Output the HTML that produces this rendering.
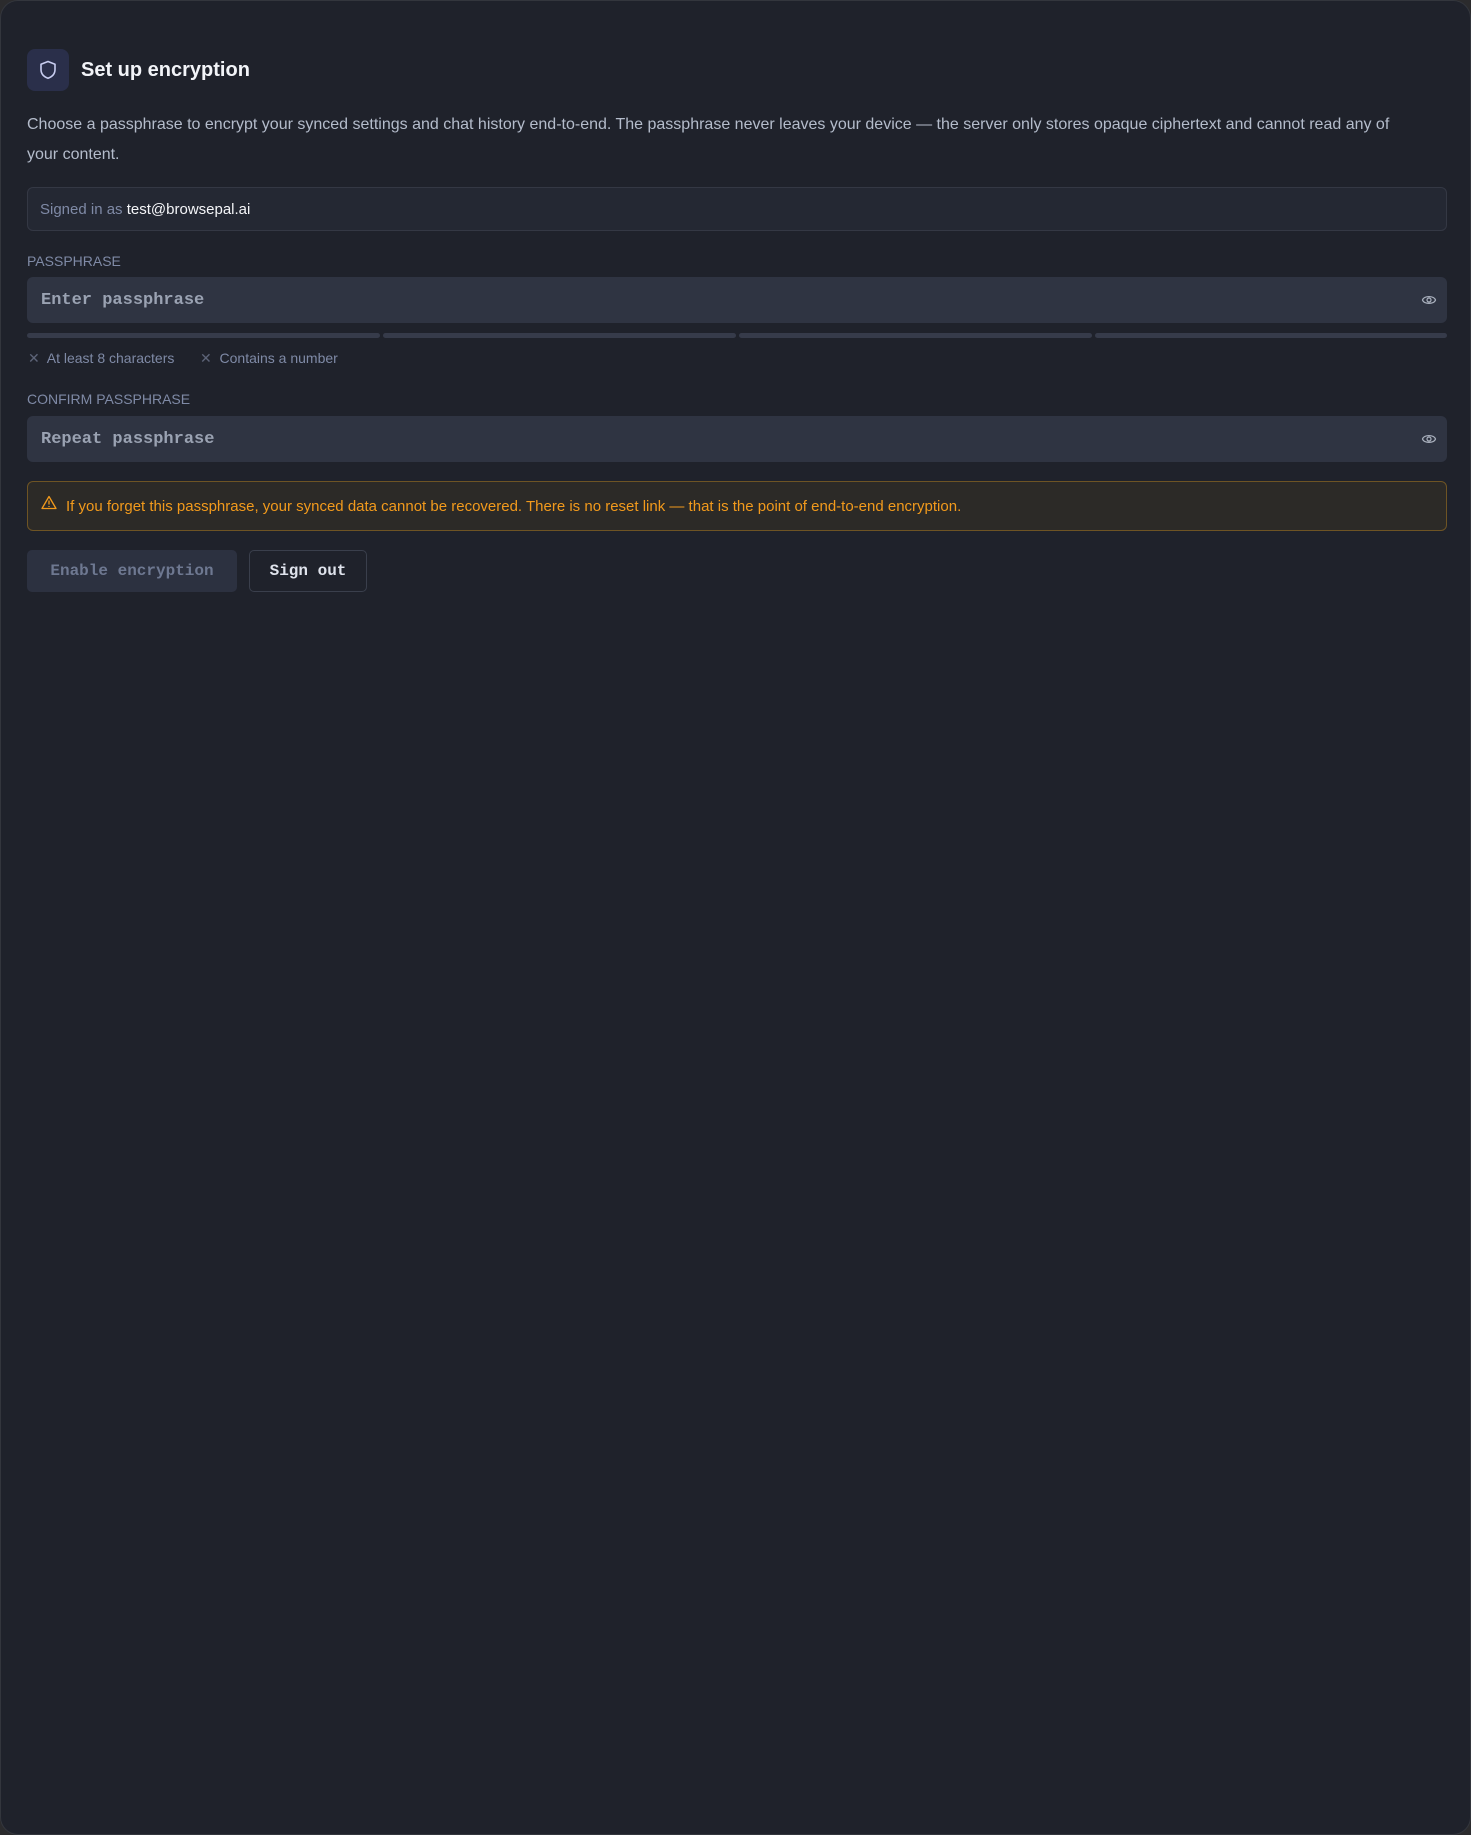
<!DOCTYPE html>
<html><head><meta charset="utf-8"><style>
*{box-sizing:border-box;margin:0;padding:0}
html,body{width:1471px;height:1835px;background:#2b2b2d;overflow:hidden}
.win{position:absolute;left:0;top:0;width:1471px;height:1835px;background:#1f222b;border-radius:18px;border:1px solid #33363d}
body{font-family:"Liberation Sans",sans-serif;color:#c3c9d6}
.abs{position:absolute}
.mono{font-family:"Liberation Mono",monospace}
.icon{left:26px;top:48px;width:42px;height:42px;border-radius:8px;background:#2a2f4a;display:flex;align-items:center;justify-content:center}
.title{left:80px;top:58px;font-size:20px;font-weight:bold;color:#f2f4f8}
.desc{left:26px;top:109px;width:1395px;font-size:16px;line-height:30px;color:#b4bccb}
.box{left:26px;width:1420px;border-radius:6px}
.signed{top:186px;height:44px;border:1px solid #343844;background:#242833;font-size:15px;padding:13px 12px;color:#7f8aa6}
.signed b{font-weight:normal;color:#f4f5f8}
.label{left:26px;font-size:14px;color:#7f8aa6}
.input{height:46px;background:#2f3442;font-size:17px;color:#9aa2b2;padding:14px 14px;border-radius:6px;font-weight:bold}
.eye{position:absolute;right:10px;top:15px}
.bar{top:332px;height:5px;background:#363b4a;border-radius:3px}
.hint{top:349px;font-size:14px;color:#7f8aa6}
.warn{top:480px;height:50px;background:#2c2a27;border:1px solid #6e5424;color:#f29a1c;font-size:15px;padding:16px 0 0 38px}
.btn{top:549px;height:42px;border-radius:5px;font-size:16px;display:flex;align-items:center;justify-content:center;font-weight:bold}
</style></head><body><div class="win">
<div class="abs icon"><svg width="18" height="20" viewBox="0 0 18 20"><path d="M9 1.5 L16 4.2 V9.5 C16 13.8 13 16.8 9 18.3 C5 16.8 2 13.8 2 9.5 V4.2 Z" fill="none" stroke="#c8cdf0" stroke-width="1.6" stroke-linejoin="round"/></svg></div>
<div class="abs title">Set up encryption</div>
<div class="abs desc">Choose a passphrase to encrypt your synced settings and chat history end-to-end. The passphrase never leaves your device — the server only stores opaque ciphertext and cannot read any of your content.</div>
<div class="abs box signed">Signed in as <b>test@browsepal.ai</b></div>
<div class="abs label" style="top:252px">PASSPHRASE</div>
<div class="abs box input mono" style="top:276px">Enter passphrase<svg class="eye" width="16" height="16" viewBox="0 0 16 16"><path d="M1.5 8 C3 3.5 13 3.5 14.5 8 C13 12.5 3 12.5 1.5 8Z" fill="none" stroke="#aab1be" stroke-width="1.2"/><circle cx="8" cy="8" r="2" fill="none" stroke="#aab1be" stroke-width="1.2"/></svg></div>
<div class="abs bar" style="left:26px;width:353px"></div>
<div class="abs bar" style="left:382px;width:353px"></div>
<div class="abs bar" style="left:738px;width:353px"></div>
<div class="abs bar" style="left:1094px;width:352px"></div>
<div class="abs hint" style="left:27px"><span style="color:#5d6478">✕</span>&nbsp; At least 8 characters</div>
<div class="abs hint" style="left:199px"><span style="color:#5d6478">✕</span>&nbsp; Contains a number</div>
<div class="abs label" style="top:390px">CONFIRM PASSPHRASE</div>
<div class="abs box input mono" style="top:415px">Repeat passphrase<svg class="eye" width="16" height="16" viewBox="0 0 16 16"><path d="M1.5 8 C3 3.5 13 3.5 14.5 8 C13 12.5 3 12.5 1.5 8Z" fill="none" stroke="#aab1be" stroke-width="1.2"/><circle cx="8" cy="8" r="2" fill="none" stroke="#aab1be" stroke-width="1.2"/></svg></div>
<div class="abs box warn"><svg style="position:absolute;left:13px;top:13px" width="16" height="15" viewBox="0 0 16 15"><path d="M8 1.5 L15 13.5 H1 Z" fill="none" stroke="#f29a1c" stroke-width="1.3" stroke-linejoin="round"/><path d="M8 5.5 V9.5 M8 11 V12" stroke="#f29a1c" stroke-width="1.3"/></svg>If you forget this passphrase, your synced data cannot be recovered. There is no reset link — that is the point of end-to-end encryption.</div>
<div class="abs btn mono" style="left:26px;width:210px;background:#2c3140;color:#6e7891">Enable encryption</div>
<div class="abs btn mono" style="left:248px;width:118px;border:1px solid #3a3f4c;color:#dfe3ec">Sign out</div>
</div></body></html>
